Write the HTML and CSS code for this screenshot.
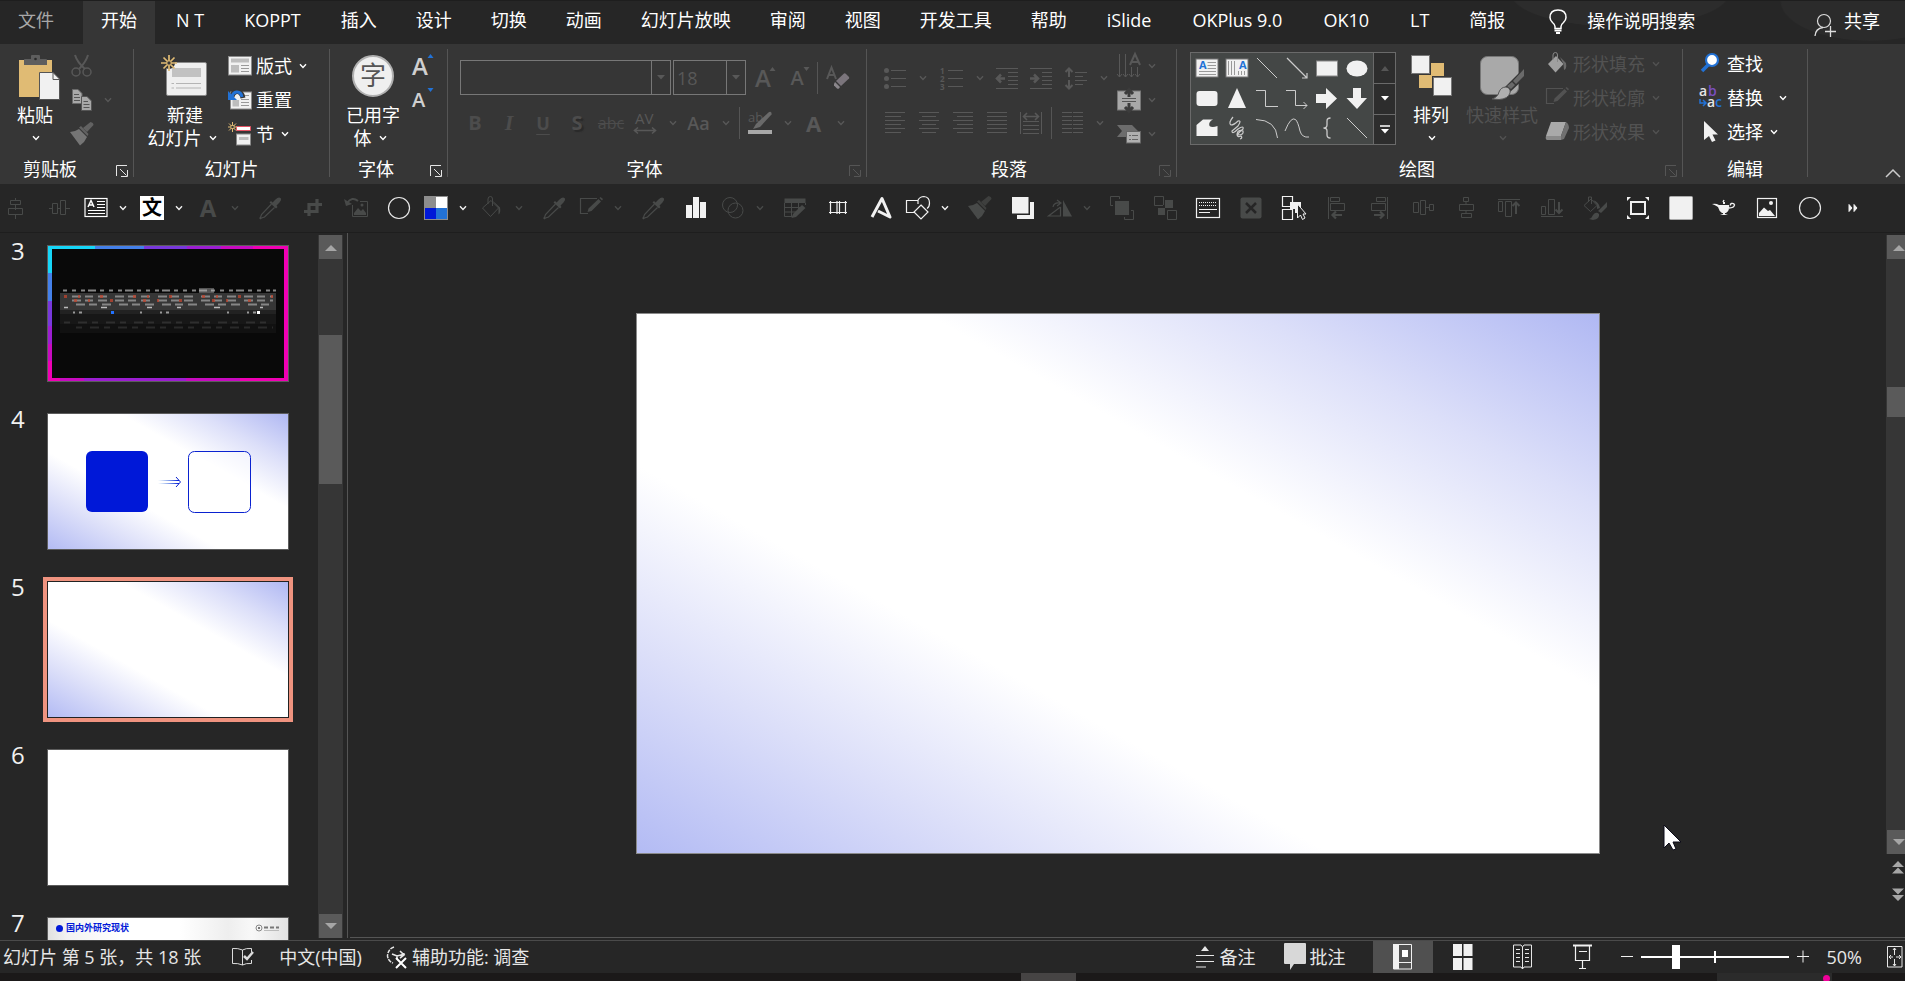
FILE: index.html
```html
<!DOCTYPE html>
<html lang="zh-CN">
<head>
<meta charset="utf-8">
<title>幻灯片编辑</title>
<link rel="stylesheet" href="styles.css">
</head>
<body>
<svg class="defs" aria-hidden="true">
  <symbol id="chev" viewBox="0 0 8 6"><path d="M1 1.2L4 4.4L7 1.2" fill="none" stroke="currentColor" stroke-width="1.4"/></symbol>
  <symbol id="launch" viewBox="0 0 12 12"><path d="M.5 11V.5H11M4 4L10.5 10.5M11.5 5V11.5H5" fill="none" stroke="currentColor"/></symbol>
  <symbol id="tri" viewBox="0 0 8 5"><path d="M0 0H8L4 4.5Z" fill="currentColor"/></symbol>
  <symbol id="triup" viewBox="0 0 12 7"><path d="M0 7H12L6 1Z" fill="currentColor"/></symbol>
  <symbol id="tridn" viewBox="0 0 12 7"><path d="M0 0H12L6 6Z" fill="currentColor"/></symbol>
  <symbol id="dropper" viewBox="0 0 24 24"><path d="M14.500 6.500L17.500 3.500Q20.500 .5 22.500 2Q24 3.500 21.500 6.500L18.500 9.500L19.500 11L18 12.500L11.500 6.500L13 5Z" fill="currentColor"/><path d="M13.500 8L3.500 18.500L2.500 21.500L1.500 22.500M16.500 11.500L6.500 21L3.500 22L2 23" fill="none" stroke="currentColor" stroke-width="1.200"/></symbol>
  <symbol id="brush" viewBox="0 0 24 24"><path d="M0 10L5 9L9 7L17 15L14 20L10 23.500Z" fill="currentColor"/><path d="M9 5.500L11 4L18.500 12L17.500 14Z" fill="currentColor" opacity=".7"/><path d="M13 6L20.500 0Q23.500 .5 23.500 3L17 10Z" fill="currentColor" opacity=".7"/></symbol>
  <symbol id="bucket" viewBox="0 0 24 24"><path d="M11 4.500L2.500 12L10.500 20.500L18.500 12Z M8 8V3Q8 .5 10.500 .5Q12.500 .5 12.500 3V10" fill="none" stroke="currentColor"/><path d="M12 4L20 11.500Q21 17 18.500 18.500V12Z" fill="currentColor"/></symbol>
  <symbol id="penrect" viewBox="0 0 24 24"><path d="M18 2.500H1.500V17.500H9" fill="none" stroke="currentColor" stroke-width="1.200"/><path d="M8.500 16L9.500 12.500L19.500 3L22 5.500L12.500 15ZM20.500 2L21.500 1L24 3L23 4.500Z" fill="currentColor"/></symbol>
</svg>

<header class="tabs">
  <nav class="tablist">
    <button class="tab file">文件</button>
    <button class="tab active">开始</button>
    <button class="tab">N T</button>
    <button class="tab latin">KOPPT</button>
    <button class="tab">插入</button>
    <button class="tab">设计</button>
    <button class="tab">切换</button>
    <button class="tab">动画</button>
    <button class="tab">幻灯片放映</button>
    <button class="tab">审阅</button>
    <button class="tab">视图</button>
    <button class="tab">开发工具</button>
    <button class="tab">帮助</button>
    <button class="tab latin">iSlide</button>
    <button class="tab latin">OKPlus 9.0</button>
    <button class="tab latin">OK10</button>
    <button class="tab latin">LT</button>
    <button class="tab">简报</button>
  </nav>
  <button class="tell"><svg width="18" height="26" viewBox="0 0 18 26"><path d="M6 19.500V17.500Q6 15.500 3.500 13.500Q1 11 1 8.500Q1 1 9 1Q17 1 17 8.500Q17 11 14.500 13.500Q12 15.500 12 17.500V19.500Z" fill="none" stroke="#fff" stroke-width="1.500"/><path d="M5.500 21.500H12.500M7 24H11" stroke="#fff" stroke-width="1.800"/></svg>操作说明搜索</button>
  <button class="share"><svg width="22" height="24" viewBox="0 0 22 24"><circle cx="10" cy="8" r="6.500" fill="none" stroke="#ddd" stroke-width="1.200"/><path d="M1 23Q1.500 15.500 9 14.500M16.500 13V24M11 18.500H22" fill="none" stroke="#ddd" stroke-width="1.300"/></svg>共享</button>
</header>

<section class="ribbon">
  <div class="group">
    <div class="body">
      <button class="big paste"><svg width="53" height="48" viewBox="-7 0 53 48"><path d="M3 5H36V18H23V42H3Z" fill="#e0bb74"/><path d="M8 4.500Q8 4 9 4H15V1Q15 0 16 0H23Q24 0 24 1V4H30Q31 4 31 5V10H8Z" fill="#5e5e5e"/><circle cx="19.500" cy="4" r="1.300" fill="#2a2a2a"/><path d="M23.500 17.500H37L43.500 24V44.500H23.500Z" fill="#f1f1f1" stroke="#555"/><path d="M37 17.500V24.500H43.500" fill="none" stroke="#555"/></svg><span>粘贴</span><span class="line"><svg class="ch"><use href="#chev"/></svg></span></button>
      <div class="rows dim">
        <button class="row" aria-label="剪切"><svg class="i24" viewBox="0 0 24 24"><path d="M5 1Q7 8 15 15M18 1Q16 8 9 15" fill="none" stroke="currentColor" stroke-width="2"/><circle cx="6" cy="18" r="4" fill="none" stroke="currentColor" stroke-width="1.500"/><circle cx="17" cy="18" r="4" fill="none" stroke="currentColor" stroke-width="1.500"/></svg></button>
        <button class="row" aria-label="复制"><svg class="i24" viewBox="0 0 24 24"><path d="M2.500 1.500H8L12 5.500V15.500H2.500Z" fill="#a8a8a8" stroke="#6a6a6a"/><path d="M4 6.500H9M4 9.500H10M4 12.500H10" stroke="#555"/><path d="M11.500 8.500H17L21.500 13V22.500H11.500Z" fill="#a8a8a8" stroke="#555"/><path d="M13.500 13.500H18M13.500 16.500H19.500M13.500 19.500H19.500" stroke="#555"/></svg><svg class="ch"><use href="#chev"/></svg></button>
        <button class="row painter" aria-label="格式刷"><svg class="i24"><use href="#brush"/></svg></button>
      </div>
    </div>
    <footer><span class="gname first">剪贴板</span><button class="ln" aria-label="剪贴板选项"><svg width="12" height="12"><use href="#launch"/></svg></button></footer>
  </div>

  <div class="group">
    <div class="body pad4">
      <button class="big newslide"><svg width="50" height="48" viewBox="0 0 50 48"><rect x="6.500" y="7.500" width="40" height="33" rx="1.500" fill="#efefef" stroke="#8a8a8a"/><rect x="12" y="13" width="29" height="9" fill="#c2c2c2"/><path d="M11.500 28.500H14M16 28.500H41M11.500 33H14M16 33H41" stroke="#b5b5b5"/><circle cx="9" cy="8" r="6" fill="#363636"/><path d="M9 0V16M1 8H17M3.500 2.500L14.500 13.500M14.500 2.500L3.500 13.500" stroke="#e0bb74" stroke-width="1.700"/><circle cx="9" cy="8" r="2.200" fill="#363636" stroke="#e0bb74"/></svg><span>新建</span><span class="line">幻灯片<svg class="ch"><use href="#chev"/></svg></span></button>
      <div class="rows">
        <button class="row"><svg class="i24" viewBox="0 0 24 24"><rect x=".5" y="2.500" width="23" height="18.500" fill="#f1f1f1" stroke="#8a8a8a"/><path d="M3 4.500H21V8.500H3ZM3 11H11V18.500H3Z" fill="#bdbdbd"/><path d="M13 11.500H21M13 14.500H21M13 17.500H21" stroke="#999"/></svg>版式<svg class="ch"><use href="#chev"/></svg></button>
        <button class="row"><svg class="i24" viewBox="0 0 24 24"><rect x="2.500" y="4" width="21" height="17" fill="#f1f1f1" stroke="#8a8a8a"/><path d="M4.500 12H11V18.500H4.500Z" fill="#bdbdbd"/><path d="M13 11.500H21M13 14.500H21M13 17.500H21M16 7.500H21" stroke="#999"/><path d="M15 10Q13.500 3 8.500 3.500Q5 4 4 8.500" fill="none" stroke="#363636" stroke-width="5"/><path d="M14 9Q13 3.500 8.500 4Q5 4.500 4 8.500" fill="none" stroke="#2272d6" stroke-width="3"/><path d="M0 3V12H9Z" fill="#2272d6"/></svg>重置</button>
        <button class="row"><svg class="i24" viewBox="0 0 24 24"><path d="M8.500 4.500H22.500V8.500H8.500Z" fill="#fff" stroke="#e35263"/><rect x="8.500" y="12" width="14" height="11" fill="#f1f1f1" stroke="#8a8a8a"/><path d="M11 15H20.500V18H11Z" fill="#bdbdbd"/><path d="M4.500 0V10M0 5H9M1 1.500L8 8.500M8 1.500L1 8.500" stroke="#e0bb74"/><rect x="3" y="3.500" width="3" height="3" fill="#363636" stroke="#e0bb74" stroke-width=".8"/></svg>节<svg class="ch"><use href="#chev"/></svg></button>
      </div>
    </div>
    <footer><span class="gname">幻灯片</span></footer>
  </div>

  <div class="group">
    <div class="body pad4">
      <button class="big usedfont"><span class="zi">字</span><span>已用字</span><span class="line">体<svg class="ch"><use href="#chev"/></svg></span></button>
      <div class="rows">
        <button class="row grow">A<svg class="mark" width="7" height="4" viewBox="0 0 6 4"><path d="M0 4H6L3 0Z" fill="#2272d6"/></svg></button>
        <button class="row grow small">A<svg class="mark" width="7" height="4" viewBox="0 0 6 4"><path d="M0 0H6L3 4Z" fill="#2272d6"/></svg></button>
      </div>
    </div>
    <footer><span class="gname">字体</span><button class="ln" aria-label="字体选项"><svg width="12" height="12"><use href="#launch"/></svg></button></footer>
  </div>

  <div class="group dim">
    <div class="body col fonts">
      <div class="tools tall">
        <label class="combo wide"><select aria-label="字体名称"><option></option></select><svg width="8" height="5"><use href="#tri"/></svg></label>
        <label class="combo"><select aria-label="字号"><option>18</option></select><svg width="8" height="5"><use href="#tri"/></svg></label>
        <button class="t grow">A<svg class="mark" width="7" height="4" viewBox="0 0 6 4"><path d="M0 4H6L3 0Z" fill="currentColor"/></svg></button>
        <button class="t grow small">A<svg class="mark" width="7" height="4" viewBox="0 0 6 4"><path d="M0 0H6L3 4Z" fill="currentColor"/></svg></button>
        <i class="sep"></i>
        <button class="t" aria-label="清除格式"><svg class="i24" viewBox="0 0 24 24"><path d="M1 13L5.500 1.500L10 13M2.500 9H8.500" fill="none" stroke="currentColor" stroke-width="2"/><path d="M10 15L18 7.500Q19 7 20 8L23 11Q23.500 12 23 12.500L15 20Z" fill="#7b757c"/><path d="M9 16L14 21L13 22.500Q12 23 11 22.500L8 19.500Q7.500 18 9 16Z" fill="#8a868b"/></svg></button>
      </div>
      <div class="tools">
        <button class="t b">B</button><button class="t it">I</button><button class="t u">U</button><button class="t sh">S</button><button class="t st">abc</button>
        <button class="t dd"><svg class="i34" viewBox="0 0 34 24"><text x="7" y="13" class="svgt av">AV</text><path d="M6 19.500H28M10 16.500L6.500 19.500L10 22.500M24 16.500L27.500 19.500L24 22.500" fill="none" stroke="currentColor" stroke-width="1.600"/></svg><svg class="ch"><use href="#chev"/></svg></button>
        <button class="t dd aa"><span>Aa</span><svg class="ch"><use href="#chev"/></svg></button>
        <i class="sep"></i>
        <button class="t dd"><svg class="i34" viewBox="0 0 34 24"><text x="5" y="11" class="svgt ab">ab</text><path d="M10 18L13 13L26 1Q29 0 28.500 3.500L17 16Z" fill="#6a6a6a"/><rect x="5" y="19" width="24" height="4" fill="#a8a8a8"/></svg><svg class="ch"><use href="#chev"/></svg></button>
        <button class="t dd fc"><span>A</span><svg class="ch"><use href="#chev"/></svg></button>
      </div>
    </div>
    <footer><span class="gname">字体</span><button class="ln" aria-label="字体选项"><svg width="12" height="12"><use href="#launch"/></svg></button></footer>
  </div>

  <div class="group dim">
    <div class="body">
      <div class="col para">
        <div class="tools tall gap">
          <button class="t dd"><svg class="i34" viewBox="0 0 34 24"><path d="M13 4.500H28M13 12.500H28M13 20.500H28" stroke="currentColor"/><g fill="currentColor"><circle cx="8.500" cy="4.500" r="2.500"/><circle cx="8.500" cy="12.500" r="2.500"/><circle cx="8.500" cy="20.500" r="2.500"/></g></svg><svg class="ch"><use href="#chev"/></svg></button>
          <button class="t dd"><svg class="i34" viewBox="0 0 34 24"><path d="M13 4.500H28M13 12.500H28M13 20.500H28" stroke="currentColor"/><text x="5" y="8" class="svgt n">1</text><text x="5" y="16" class="svgt n">2</text><text x="5" y="24" class="svgt n">3</text></svg><svg class="ch"><use href="#chev"/></svg></button>
          <button class="t" aria-label="减少缩进"><svg class="i24" viewBox="0 0 24 24"><path d="M1 2.500H23M13 6.500H23M13 10.500H23M13 14.500H23M13 18.500H23M1 22.500H23" stroke="currentColor"/><path d="M4 12.500H10M6 8.500L2 12.500L6 16.500" stroke="currentColor" stroke-width="2.500" fill="none"/></svg></button>
          <button class="t" aria-label="增加缩进"><svg class="i24" viewBox="0 0 24 24"><path d="M1 2.500H23M13 6.500H23M13 10.500H23M13 14.500H23M13 18.500H23M1 22.500H23" stroke="currentColor"/><path d="M1 12.500H8M5 8.500L9 12.500L5 16.500" stroke="currentColor" stroke-width="2.500" fill="none"/></svg></button>
          <button class="t dd"><svg class="i34" viewBox="0 0 34 24"><path d="M16 6.500H28M16 10.500H24M16 14.500H28M16 18.500H24" stroke="currentColor"/><path d="M10 3V11M10 14V22M6.500 6L10 2.500L13.500 6M6.500 19L10 22.500L13.500 19" stroke="currentColor" stroke-width="2" fill="none"/></svg><svg class="ch"><use href="#chev"/></svg></button>
        </div>
        <div class="tools">
          <button class="t" aria-label="左对齐"><svg class="i24" viewBox="0 0 24 24"><path d="M2 1.500H22M2 5.500H18M2 9.500H22M2 13.500H18M2 17.500H22M2 21.500H18" stroke="currentColor"/></svg></button>
          <button class="t" aria-label="居中"><svg class="i24" viewBox="0 0 24 24"><path d="M2 1.500H22M5 5.500H19M2 9.500H22M5 13.500H19M2 17.500H22M5 21.500H19" stroke="currentColor"/></svg></button>
          <button class="t" aria-label="右对齐"><svg class="i24" viewBox="0 0 24 24"><path d="M2 1.500H22M6 5.500H22M2 9.500H22M6 13.500H22M2 17.500H22M6 21.500H22" stroke="currentColor"/></svg></button>
          <button class="t" aria-label="两端对齐"><svg class="i24" viewBox="0 0 24 24"><path d="M2 1.500H22M2 5.500H22M2 9.500H22M2 13.500H22M2 17.500H22M2 21.500H22" stroke="currentColor"/></svg></button>
          <button class="t" aria-label="分散对齐"><svg class="i24" viewBox="0 0 24 24"><path d="M1.500 1V23M22.500 1V23M4 10.500H20M4 14.500H20M4 18.500H20M4 22.500H20" stroke="currentColor"/><path d="M4.500 5.500H19.500M8 2L4.500 5.500L8 9M16 2L19.500 5.500L16 9" stroke="currentColor" stroke-width="1.600" fill="none"/></svg></button>
          <i class="sep"></i>
          <button class="t dd"><svg class="i34" viewBox="0 0 34 24"><path d="M7 1.500H17M18 1.500H28M7 5.500H17M18 5.500H28M7 9.500H17M18 9.500H28M7 13.500H17M18 13.500H28M7 17.500H17M18 17.500H28M7 21.500H17M18 21.500H28" stroke="currentColor"/></svg><svg class="ch"><use href="#chev"/></svg></button>
        </div>
      </div>
      <div class="rows tight">
        <button class="row" aria-label="文字方向"><svg class="i24" viewBox="0 0 24 24"><path d="M2.500 0V23M8.500 0V23M14.500 13V23M20.500 13V23M0 20L2.500 23L5 20M6 20L8.500 23L11 20M12 20L14.500 23L17 20M18 20L20.500 23L23 20" fill="none" stroke="currentColor"/><path d="M13 11L18 0L23 11M15 8H21.500" fill="none" stroke="currentColor" stroke-width="2"/></svg><svg class="ch"><use href="#chev"/></svg></button>
        <button class="row" aria-label="对齐文本"><svg class="i24" viewBox="0 0 24 24"><rect x=".5" y="3" width="23" height="19" fill="#a8a8a8" stroke="#777"/><path d="M5 10.500H19M5 13.500H19" stroke="#555"/><path d="M12 9V3M8 6L12 1.500L16 6M12 15V22M8 19L12 23.500L16 19" fill="none" stroke="#3c3c3c" stroke-width="3"/></svg><svg class="ch"><use href="#chev"/></svg></button>
        <button class="row" aria-label="转换为 SmartArt"><svg class="i24" viewBox="0 0 24 24"><path d="M0 3H15L21 9H9V15H0L5 9Z" fill="#6c6c6c"/><rect x="9.500" y="9.500" width="14" height="11.500" fill="#b0b0b0" stroke="#666"/><path d="M12 13.500H14M15 13.500H21M12 17.500H14M15 17.500H21" stroke="#666"/></svg><svg class="ch"><use href="#chev"/></svg></button>
      </div>
    </div>
    <footer><span class="gname">段落</span><button class="ln" aria-label="段落选项"><svg width="12" height="12"><use href="#launch"/></svg></button></footer>
  </div>

  <div class="group">
    <div class="body draw">
      <div class="gallery">
        <div class="shapes">
          <button aria-label="文本框"><svg class="i24" viewBox="0 0 24 24"><rect x="1" y="3" width="22" height="18" fill="#f1f1f1" stroke="#777"/><text x="4" y="13" class="svgt ba">A</text><path d="M12.500 6.500H21M12.500 9.500H21M12.500 12.500H21M4 15.500H21M4 18.500H21" stroke="#999"/></svg></button>
          <button aria-label="竖排文本框"><svg class="i24" viewBox="0 0 24 24"><rect x="1" y="3" width="22" height="18" fill="#f1f1f1" stroke="#777"/><text x="14" y="13" class="svgt ba">A</text><path d="M3.500 5V19M6.500 5V19M9.500 5V19M13.500 15V19M16.500 15V19M19.500 15V19" stroke="#999"/></svg></button>
          <button aria-label="直线"><svg class="i24" viewBox="0 0 24 24"><path d="M2 2L22 22" stroke="#ccc"/></svg></button>
          <button aria-label="箭头"><svg class="i24" viewBox="0 0 24 24"><path d="M2 2L22 22M22 17V22H17" stroke="#ccc" fill="none" stroke-width="1.200"/></svg></button>
          <button aria-label="矩形"><svg class="i24" viewBox="0 0 24 24"><rect x="1.500" y="5" width="21" height="15" fill="#f1f1f1" stroke="#888"/></svg></button>
          <button aria-label="椭圆"><svg class="i24" viewBox="0 0 24 24"><ellipse cx="12" cy="12.500" rx="10.500" ry="8" fill="#f1f1f1"/></svg></button>
          <button aria-label="圆角矩形"><svg class="i24" viewBox="0 0 24 24"><rect x="1.500" y="5" width="21" height="15" rx="3" fill="#f1f1f1"/></svg></button>
          <button aria-label="三角形"><svg class="i24" viewBox="0 0 24 24"><path d="M12 2L21 22H3Z" fill="#f1f1f1"/></svg></button>
          <button aria-label="肘形连接符"><svg class="i24" viewBox="0 0 24 24"><path d="M1 4.500H10.500V20.500H23" stroke="#ccc" fill="none"/></svg></button>
          <button aria-label="肘形箭头"><svg class="i24" viewBox="0 0 24 24"><path d="M1 4.500H10.500V19.500H22M18.500 16L22 19.500L18.500 23" stroke="#ccc" fill="none"/></svg></button>
          <button aria-label="右箭头"><svg class="i24" viewBox="0 0 24 24"><path d="M1 8H11V2L22 12.500L11 23V17H1Z" fill="#f1f1f1"/></svg></button>
          <button aria-label="下箭头"><svg class="i24" viewBox="0 0 24 24"><path d="M8 2H16V12H22L12 23L1.500 12H8Z" fill="#f1f1f1"/></svg></button>
          <button aria-label="任意多边形"><svg class="i24" viewBox="0 0 24 24"><path d="M1.500 9L8 3.500H18Q13 6 14.500 10Q17 12 22.500 10V20H1.500Z" fill="#f1f1f1"/></svg></button>
          <button aria-label="自由曲线"><svg class="i24" viewBox="0 0 24 24"><path d="M8 1Q3 7 6 9Q9 9 13 5Q17 4 13 10L7 15Q7 19 13 13Q19 9 18 13Q12 18 13 19Q19 19 18 15Q13 13 12 18Q12 22 16 20Q18 22 15 23" stroke="#ccc" fill="none" stroke-width="1.200"/></svg></button>
          <button aria-label="弧形"><svg class="i24" viewBox="0 0 24 24"><path d="M1 3.500Q21 4 22.500 22" stroke="#ccc" fill="none"/></svg></button>
          <button aria-label="曲线"><svg class="i24" viewBox="0 0 24 24"><path d="M0 15Q6 0 10.500 3.500Q13 6 15 15Q17 22 24 21" stroke="#ccc" fill="none"/></svg></button>
          <button aria-label="左大括号"><svg class="i24" viewBox="0 0 24 24"><path d="M15.500 2Q12 2 12 5V9Q12 12 8.500 12Q12 12 12 15V19Q12 22 15.500 22" stroke="#ccc" fill="none" stroke-width="1.300"/></svg></button>
          <button aria-label="直线"><svg class="i24" viewBox="0 0 24 24"><path d="M2 2L22 22" stroke="#ccc"/></svg></button>
        </div>
        <div class="gscroll">
          <button class="off" aria-label="上一行"><svg width="8" height="5" viewBox="0 0 8 5"><path d="M0 5H8L4 0Z" fill="currentColor"/></svg></button>
          <button aria-label="下一行"><svg width="8" height="5"><use href="#tri"/></svg></button>
          <button aria-label="其他"><svg width="10" height="9" viewBox="0 0 10 9"><path d="M0 1H10" stroke="#fff" stroke-width="1.500"/><path d="M1 4H9L5 8.500Z" fill="#fff"/></svg></button>
        </div>
      </div>
      <button class="big arrange"><svg width="44" height="48" viewBox="0 0 44 48"><path d="M22 8H35V21H22ZM10 20H23V33H10Z" fill="#e0bb74"/><rect x="2.500" y=".5" width="18" height="18" fill="#f1f1f1" stroke="#777"/><rect x="24.500" y="22.500" width="18" height="18" fill="#f1f1f1" stroke="#777"/></svg><span>排列</span><span class="line"><svg class="ch"><use href="#chev"/></svg></span></button>
      <button class="big quick dim"><svg width="46" height="48" viewBox="0 0 46 48"><rect x="1.500" y="1.500" width="38" height="38" rx="7" fill="#a9a9a9" stroke="#777"/><path d="M45 13V24L30 38L24 34Z" fill="#363636"/><path d="M45 14V21L37 29L34 26ZM33 27L36 30L32 34L28 31Z" fill="#6a6a6a"/><path d="M13 44Q19 42 20 37Q22 32 27 32Q32 33 31 38Q29 44 20 44.500Z" fill="#b0b0b0" stroke="#555"/></svg><span>快速样式</span><span class="line"><svg class="ch"><use href="#chev"/></svg></span></button>
      <div class="rows dim">
        <button class="row"><svg class="i24" viewBox="0 0 24 24"><path d="M11 4L3 12L10.500 20.500L18.500 12Z" fill="#a0a0a0"/><path d="M8 8V3Q8 .5 10.500 .5Q12.500 .5 12.500 3V10" fill="none" stroke="#888"/><path d="M15 5L21 11Q22 17 19 18L18.500 12Z" fill="#6a6a6a"/></svg>形状填充<svg class="ch"><use href="#chev"/></svg></button>
        <button class="row"><svg class="i24"><use href="#penrect"/></svg>形状轮廓<svg class="ch"><use href="#chev"/></svg></button>
        <button class="row"><svg class="i24" viewBox="0 0 24 24"><path d="M6 2H21L16 16H1Z" fill="#a9a9a9"/><path d="M1 16H16V20H2Q0 19 1 16Z" fill="#8a8a8a"/><path d="M21 2Q24 4 24 8L19 19L16 20V16Z" fill="#707070"/></svg>形状效果<svg class="ch"><use href="#chev"/></svg></button>
      </div>
    </div>
    <footer class="dimln"><span class="gname">绘图</span><button class="ln" aria-label="形状选项"><svg width="12" height="12"><use href="#launch"/></svg></button></footer>
  </div>

  <div class="group">
    <div class="body edit">
      <div class="rows">
        <button class="row"><svg class="i24" viewBox="0 0 24 24"><path d="M3 19L10 12" stroke="#2272d6" stroke-width="3.500"/><circle cx="13" cy="8" r="6" fill="#fff" stroke="#2272d6" stroke-width="2.200"/></svg>查找</button>
        <button class="row"><svg class="i24" viewBox="0 0 24 24"><g class="svgt rp"><text x="0" y="10" fill="#e6e6e6">a</text><text x="9" y="10" fill="#7a4fc0">b</text><text x="8" y="21" fill="#e6e6e6">a</text><text x="16" y="21" fill="#2272d6">c</text></g><path d="M1 13V17H6M4 14L7 17L4 20" fill="none" stroke="#2272d6" stroke-width="1.500"/></svg>替换<svg class="ch far"><use href="#chev"/></svg></button>
        <button class="row"><svg class="i24" viewBox="0 0 24 24"><path d="M5 1V20L10 16L13 22L16.500 20.500L13.500 14.500H19Z" fill="#f1f1f1"/></svg>选择<svg class="ch"><use href="#chev"/></svg></button>
      </div>
    </div>
    <footer><span class="gname">编辑</span></footer>
  </div>
  <div class="rest"><button aria-label="折叠功能区"><svg width="16" height="9" viewBox="0 0 16 9"><path d="M1 8L8 1L15 8" fill="none" stroke="#ccc" stroke-width="1.500"/></svg></button></div>
</section>

<section class="qat">
  <button class="q off"><svg class="i24" viewBox="0 0 24 24"><path d="M12.500 2V4M12.500 9V14M12.500 19V23" stroke="currentColor"/><path d="M7.500 4.500H17.500V8.500H7.500ZM5.500 12.500H19.500V18.500H5.500Z" fill="none" stroke="currentColor"/></svg></button>
  <button class="q off"><svg class="i24" viewBox="0 0 24 24"><path d="M2 12.500H5M11 12.500H13M19 12.500H23" stroke="currentColor"/><path d="M5.500 7.500H10.500V17.500H5.500ZM13.500 4.500H18.500V18.500H13.500Z" fill="none" stroke="currentColor"/></svg></button>
  <button class="q split"><svg class="i24" viewBox="0 0 24 24"><rect x="1" y="2.500" width="22" height="18" fill="none" stroke="#fff" stroke-width="1.200"/><path d="M4 11L7 4.500L10 11M5 9H9" fill="none" stroke="#fff" stroke-width="1.500"/><path d="M13 5.500H21M13 8.500H21M13 11.500H21M4 14.500H21M4 17.500H21" stroke="#fff"/></svg><svg class="ch"><use href="#chev"/></svg></button>
  <button class="q split"><span class="wen">文</span><svg class="ch"><use href="#chev"/></svg></button>
  <button class="q split off"><span class="bigA">A</span><svg class="ch"><use href="#chev"/></svg></button>
  <button class="q off"><svg class="i24"><use href="#dropper"/></svg></button>
  <button class="q off"><svg class="i24" viewBox="0 0 24 24"><path d="M3 15.500H16V3M8 20V8.500H21" fill="none" stroke="currentColor" stroke-width="3.200"/></svg></button>
  <button class="q off"><svg class="i24" viewBox="0 0 24 24"><path d="M16 5.500H23.500V20.500H8.500V9" fill="none" stroke="currentColor"/><path d="M10 19V17L14 12L17 15L19 13L22 17V19Z" fill="currentColor"/><circle cx="18" cy="9" r="1.500" fill="currentColor"/><path d="M3 7Q8 0 14 5" fill="none" stroke="currentColor" stroke-width="2"/><path d="M0 3L2 10L8 8Z" fill="currentColor"/></svg></button>
  <button class="q"><svg class="i24" viewBox="0 0 24 24"><circle cx="12" cy="12" r="10.500" fill="none" stroke="#e8e8e8" stroke-width="1.200"/></svg></button>
  <button class="q split"><svg class="i24" viewBox="0 0 24 24"><rect width="24" height="24" fill="#8d8d8d"/><path d="M12 1H23V12H12Z" fill="#fff"/><path d="M1 12H12V23H1Z" fill="#0018d8"/><path d="M12 12H23V23H12Z" fill="#2272d6"/></svg><svg class="ch"><use href="#chev"/></svg></button>
  <button class="q split off"><svg class="i24"><use href="#bucket"/></svg><svg class="ch"><use href="#chev"/></svg></button>
  <button class="q off"><svg class="i24"><use href="#dropper"/></svg></button>
  <button class="q split off"><svg class="i24"><use href="#penrect"/></svg><svg class="ch"><use href="#chev"/></svg></button>
  <button class="q off"><svg class="i24"><use href="#dropper"/></svg></button>
  <button class="q"><svg class="i24" viewBox="0 0 24 24"><path d="M2 9H8V22H2ZM9 1H15V22H9ZM16 6H22V22H16Z" fill="#f1f1f1"/></svg></button>
  <button class="q split off"><svg class="i24" viewBox="0 0 24 24"><circle cx="9" cy="9" r="7.500" fill="none" stroke="currentColor"/><circle cx="14.500" cy="14.500" r="7.500" fill="none" stroke="currentColor"/></svg><svg class="ch"><use href="#chev"/></svg></button>
  <button class="q off"><svg class="i24" viewBox="0 0 24 24"><path d="M1.500 2.500H22.500V7H1.500Z" fill="currentColor"/><path d="M1.500 7V20.500H11M22.500 7V9M8.500 7V20M15.500 7V13M1.500 11.500H17M1.500 16H13" fill="none" stroke="currentColor"/><path d="M8.500 22L10 18L19 9L22.500 12L13 21Z" fill="currentColor"/></svg></button>
  <button class="q"><svg class="i24" viewBox="0 0 24 24"><path d="M3 6.500H21M3 16.500H21M4.500 5V18M11 5V18M13.500 5V18M19.500 5V18" stroke="#f1f1f1" fill="none" stroke-width="1.200"/></svg></button>
  <button class="q"><svg class="i24" viewBox="0 0 24 24"><path d="M3 21L13 2.500L21 21L9 15" fill="none" stroke="#f1f1f1" stroke-width="3" stroke-linejoin="round"/></svg></button>
  <button class="q split"><svg class="i24" viewBox="0 0 24 24"><path d="M9 16.500H.5V4.500H12V8M12 4Q14 .5 18 .5Q23.500 1 23.500 7Q23.500 11 21 12.500M15 9L22 16L15 23L8 16Z" fill="none" stroke="#f1f1f1" stroke-width="1.200"/></svg><svg class="ch"><use href="#chev"/></svg></button>
  <button class="q off"><svg class="i24"><use href="#brush"/></svg></button>
  <button class="q"><svg class="i24" viewBox="0 0 24 24"><path d="M6 6H23V23H6Z" fill="#f1f1f1"/><path d="M0 0H19V19H0Z" fill="#262626"/><path d="M1 1H17.500V17.500H1Z" fill="#f1f1f1"/></svg></button>
  <button class="q split off"><svg class="i24" viewBox="0 0 24 24"><path d="M15 4L24 20.500H15Z" fill="currentColor"/><path d="M12.500 11V20H.5L12.500 11M5 11Q6 6 12 7M9 4L13 7L9 10" fill="none" stroke="currentColor" stroke-width="1.200"/></svg><svg class="ch"><use href="#chev"/></svg></button>
  <button class="q off"><svg class="i24" viewBox="0 0 24 24"><path d="M5 5H19V19H5Z" fill="currentColor"/><path d="M3 9.500H.5V.5H9.500V3M21 14.500H23.500V23.500H14.500V21" fill="none" stroke="currentColor"/></svg></button>
  <button class="q off"><svg class="i24" viewBox="0 0 24 24"><path d="M12 4H20V12H12ZM5 12H12V19H5Z" fill="currentColor"/><path d="M10 9.500H1.500V.5H10.500V9M14.500 14.500H23.500V23.500H14.500Z" fill="none" stroke="currentColor"/></svg></button>
  <button class="q"><svg class="i24" viewBox="0 0 24 24"><rect x=".5" y="2.500" width="23" height="19" fill="none" stroke="#f1f1f1" stroke-width="1.200"/><path d="M3 6.500H21M3 9.500H21" stroke="#f1f1f1" stroke-dasharray="1 1"/><path d="M3 13.500H21" stroke="#f1f1f1"/><path d="M3 16.500H14" stroke="#f1f1f1"/></svg></button>
  <button class="q off"><svg class="i24" viewBox="0 0 24 24"><rect x="1.500" y="1.500" width="21" height="21" rx="2" fill="currentColor"/><path d="M7 7L17 17M17 7L7 17" stroke="#262626" stroke-width="2.500"/></svg></button>
  <button class="q"><svg class="i24" viewBox="0 0 24 24"><path d="M.5 .5H10.500V10.500H.5ZM.5 13.500H10.500V23.500H.5Z" fill="none" stroke="#f1f1f1" stroke-width="1.200"/><path d="M8 6H19V17H13V13H8Z" fill="#f1f1f1"/><path d="M15.500 8V22L18.500 19L20.500 23.500L23 22L21 18H24Z" fill="#262626" stroke="#f1f1f1"/></svg></button>
  <button class="q off"><svg class="i24" viewBox="0 0 24 24"><path d="M3.500 1V23M5.500 1.500H14.500V5.500H5.500ZM5.500 7.500H19.500V14.500H5.500Z" fill="none" stroke="currentColor"/><path d="M7 19H17M11 15.500L7.500 19L11 22.500" fill="none" stroke="currentColor" stroke-width="2.200"/></svg></button>
  <button class="q off"><svg class="i24" viewBox="0 0 24 24"><path d="M19.500 1V23M8.500 1.500H17.500V5.500H8.500ZM3.500 7.500H17.500V14.500H3.500Z" fill="none" stroke="currentColor"/><path d="M6 19H16M12 15.500L15.500 19L12 22.500" fill="none" stroke="currentColor" stroke-width="2.200"/></svg></button>
  <button class="q off"><svg class="i24" viewBox="0 0 24 24"><path d="M2.500 6.500H7.500V16.500H2.500ZM9.500 4.500H14.500V18.500H9.500ZM18.500 8.500H22.500V14.500H18.500ZM14 11.500H18" fill="none" stroke="currentColor"/></svg></button>
  <button class="q off"><svg class="i24" viewBox="0 0 24 24"><path d="M9.500 1.500H14.500V5.500H9.500ZM5.500 8.500H19.500V14.500H5.500ZM7.500 17.500H17.500V21.500H7.500ZM12 5V8M12 14V17" fill="none" stroke="currentColor"/></svg></button>
  <button class="q off"><svg class="i24" viewBox="0 0 24 24"><path d="M1 3.500H23M1.500 5.500H5.500V15.500H1.500ZM8.500 5.500H14.500V20.500H8.500Z" fill="none" stroke="currentColor"/><path d="M19 6V18M15.500 10L19 6.500L22.500 10" fill="none" stroke="currentColor" stroke-width="2"/></svg></button>
  <button class="q off"><svg class="i24" viewBox="0 0 24 24"><path d="M1 20.500H23M1.500 10.500H5.500V18.500H1.500ZM8.500 3.500H14.500V18.500H8.500Z" fill="none" stroke="currentColor"/><path d="M19 6V17M15.500 13.500L19 17L22.500 13.500" fill="none" stroke="currentColor" stroke-width="2"/></svg></button>
  <button class="q off"><svg class="i24" viewBox="0 0 24 24"><path d="M8 3L1 9.500L7.500 15.500L14 9.500Z M5.500 6V1H8.500V8" fill="none" stroke="currentColor"/><path d="M10 4Q16 6 17 12L14 13V9ZM24 6V11L18 17L15 15ZM6 23Q9 22 10 19Q13 15 16 18Q17 23 10 24Z" fill="currentColor"/></svg></button>
  <button class="q"><svg class="i24" viewBox="0 0 24 24"><rect x="5" y="6" width="14" height="12" fill="none" stroke="#f1f1f1" stroke-width="2"/><path d="M1 1H5L1 5ZM23 1H19L23 5ZM1 23H5L1 19ZM23 23H19L23 19Z" fill="#f1f1f1"/></svg></button>
  <button class="q"><svg class="i24" viewBox="0 0 24 24"><rect x=".5" y=".5" width="23" height="23" rx="1" fill="#f1f1f1" stroke="#aaa"/></svg></button>
  <button class="q"><svg class="i24" viewBox="0 0 24 24"><path d="M0 8Q4 7 7 9H17Q18 14 14 17H13V18L16 19H8L11 18V17H10Q7 15 6 11Q3 9 0 8ZM11 6H13V8H11Z" fill="#f1f1f1"/><path d="M11 6L12 4M17 12Q22 12 22.500 9Q22 7 19.500 7.500Q18 8 18.500 9.500" fill="none" stroke="#f1f1f1" stroke-width="1.400"/></svg></button>
  <button class="q"><svg class="i24" viewBox="0 0 24 24"><rect x="2.500" y="2.500" width="19" height="19" fill="none" stroke="#f1f1f1" stroke-width="1.200"/><path d="M4 20V17L9 11.500L13 15L15 14L20 20Z" fill="#f1f1f1"/><circle cx="16" cy="7" r="2" fill="#f1f1f1"/></svg></button>
  <button class="q"><svg class="i24" viewBox="0 0 24 24"><circle cx="12" cy="12" r="10.500" fill="none" stroke="#e8e8e8" stroke-width="1.200"/></svg></button>
  <button class="q"><svg class="i24" viewBox="0 0 24 24"><path d="M8 8.500L11 12L8 15.500ZM13 8.500L16 12L13 15.500Z" fill="#f1f1f1" stroke="#f1f1f1"/></svg></button>
</section>

<main class="work">
  <aside class="panel">
    <ol class="thumbs">
      <li><span class="num">3</span><button class="thumb" aria-label="幻灯片 3"><svg viewBox="0 0 240 135">
        <rect width="240" height="135" fill="#f000b4"/>
        <path d="M0 0H48V4L4 28H0Z" fill="#16d6f8"/><path d="M47 0H96V4H47ZM0 27H4V56H0Z" fill="#4480ea"/><path d="M96 0H140V4H96ZM0 55H4V82H0Z" fill="#7838dc"/><path d="M139 0H174V4H139ZM0 80H4V100H0ZM36 131H138V135H36Z" fill="#9c1ed2"/><path d="M173 0H205V4H173ZM0 98H4V115H0ZM12 131H36V135H12ZM138 131H192V135H138Z" fill="#c80ac0"/>
        <rect x="4" y="3" width="232" height="129" fill="#090909"/>
        <rect x="12" y="47" width="216" height="17" fill="#363636"/><rect x="12" y="64" width="216" height="4" fill="#222"/><rect x="151" y="42" width="15" height="5" fill="#555"/>
        <path d="M15 44.500H228" stroke="#bbb" stroke-width="2" stroke-dasharray="4 5 4 5 4 3 8 4" opacity=".7"/>
        <path d="M24 50.500H225M24 54.500H225M28 58.500H225" stroke="#bbb" stroke-width="2" stroke-dasharray="9 4 8 5 9 8" opacity=".6"/>
        <path d="M16 50.500H225M26 54.500H225" stroke="#c0452e" stroke-width="3" stroke-dasharray="3 11 2 20 3 30" opacity=".75"/>
        <path d="M16 61.500H215" stroke="#ddd" stroke-width="1.500" stroke-dasharray="4 33 6 40 5 25" opacity=".8"/>
        <path d="M25 66.500H223" stroke="#ccc" stroke-width="2" stroke-dasharray="2 4 3 58 2 18" opacity=".7"/><path d="M63 65H66V68H63Z" fill="#2272ff"/><path d="M209 65H212V68H209Z" fill="#fff"/>
        <rect x="12" y="68" width="216" height="10" fill="#1c1c1c" opacity=".8"/><rect x="12" y="78" width="216" height="9" fill="#151515" opacity=".7"/><path d="M16 76.500H225M28 81.500H225" stroke="#666" stroke-width="2" stroke-dasharray="6 8 9 5" opacity=".3"/>
      </svg></button></li>
      <li><span class="num">4</span><button class="thumb grad" aria-label="幻灯片 4"><svg viewBox="0 0 240 135"><defs><linearGradient id="ar"><stop offset="0" stop-color="#2272d6" stop-opacity="0"/><stop offset="1" stop-color="#0018d8"/></linearGradient></defs><rect x="38" y="37" width="62" height="61" rx="6" fill="#0018d8"/><rect x="140.500" y="37.500" width="62" height="61" rx="6" fill="#fff" fill-opacity=".5" stroke="#0a22d0"/><path d="M110 66H131V67H110ZM110 69H131V70H110Z" fill="url(#ar)"/><path d="M128 63L132.500 68L128 73" fill="none" stroke="#0a22d0"/></svg></button></li>
      <li><span class="num">5</span><button class="thumb grad sel" aria-label="幻灯片 5"></button></li>
      <li><span class="num">6</span><button class="thumb" aria-label="幻灯片 6"></button></li>
      <li><span class="num">7</span><button class="thumb study"><span class="dot"></span><b>国内外研究现状</b><svg width="25" height="8" viewBox="0 0 25 8"><circle cx="4" cy="4" r="3" fill="none" stroke="#888"/><path d="M3 4H5M9 3.500H24" stroke="#777" stroke-width="2" stroke-dasharray="4 2"/><path d="M9 6.500H24" stroke="#bbb"/></svg></button></li>
    </ol>
    <div class="sb"><button aria-label="向上滚动"><svg width="12" height="7"><use href="#triup"/></svg></button><i class="a1"></i><i class="grip g1"></i><i class="z1"></i><button aria-label="向下滚动"><svg width="12" height="7"><use href="#tridn"/></svg></button></div>
  </aside>
  <div class="stage">
    <div class="slide"></div>
    <svg class="cursor" width="20" height="28" viewBox="0 0 20 28"><path d="M1 1V24L6 19L10 26L13 25L10 18H18Z" fill="#fff" stroke="#0b0b18"/></svg>
  </div>
  <div class="right">
    <div class="sb narrow"><button aria-label="向上滚动"><svg width="12" height="7"><use href="#triup"/></svg></button><i class="a2"></i><i class="grip g2"></i><i class="z2"></i><button aria-label="向下滚动"><svg width="12" height="7"><use href="#tridn"/></svg></button></div>
    <button class="pg" aria-label="上一张"><svg width="12" height="13" viewBox="0 0 12 13"><path d="M0 6H12L6 0ZM0 12.500H12L6 6.500Z" fill="currentColor"/></svg></button>
    <button class="pg" aria-label="下一张"><svg width="12" height="13" viewBox="0 0 12 13"><path d="M0 .5H12L6 6.500ZM0 7H12L6 13Z" fill="currentColor"/></svg></button>
  </div>
</main>

<footer class="status">
  <span class="s-slide">幻灯片 第 5 张，共 18 张</span>
  <button class="s-spell" aria-label="拼写检查"><svg width="22" height="20" viewBox="0 0 22 20"><path d="M10.500 3Q6 1 .5 1.500V16.500Q6 16 10.500 18V3Q14 1 19.500 1.500V5M10.500 18Q14 16 19.500 16.500V13" fill="none" stroke="#ddd"/><path d="M12 9L15 12L21 5" fill="none" stroke="#ddd" stroke-width="2.500"/></svg></button>
  <button class="s-lang">中文(中国)</button>
  <button class="s-acc"><svg width="22" height="22" viewBox="0 0 22 22"><path d="M8 1Q2 3 1.500 10Q2 15 7 17" fill="none" stroke="#e6e6e6" stroke-width="1.500" stroke-dasharray="4 1"/><path d="M6 8L11 10L19 8M11 9V13M14 5L18 9L14 12" fill="none" stroke="#e6e6e6" stroke-width="1.600"/><path d="M10 12L20 22M20 12L10 22" stroke="#fff" stroke-width="2"/></svg>辅助功能: 调查</button>
  <span class="fill"></span>
  <button class="s-notes"><svg width="18" height="22" viewBox="0 0 18 22"><path d="M9 0L13 5H5Z" fill="#e6e6e6"/><path d="M0 9.500H18M0 15.500H18M0 21H10" stroke="#e6e6e6" stroke-width="1.200"/></svg>备注</button>
  <button class="s-comm"><svg width="22" height="27" viewBox="0 0 22 27"><path d="M1 0H21Q22 0 22 1V20Q22 21 21 21H10L6 27V21H1Q0 21 0 20V1Q0 0 1 0Z" fill="#d8d8d8"/></svg>批注</button>
  <button class="view on" aria-label="普通视图"><svg width="20" height="26" viewBox="0 0 20 26"><path d="M.5 .5H18.500V25H.5Z" fill="none" stroke="#f1f1f1"/><path d="M0 0H6V25H0Z" fill="#f1f1f1"/><path d="M9 6H15V13H9Z" fill="#fff"/><path d="M6 18.500H19" stroke="#f1f1f1"/></svg></button>
  <button class="view" aria-label="幻灯片浏览"><svg width="20" height="26" viewBox="0 0 20 26"><path d="M0 0H9V12H0ZM10.500 0H19.500V12H10.500ZM0 14H9V26H0ZM10.500 14H19.500V26H10.500Z" fill="#f1f1f1"/></svg></button>
  <button class="view" aria-label="阅读视图"><svg width="20" height="26" viewBox="0 0 20 26"><path d="M9.500 3L8 1H.5V23H8L9.500 25L11 23H18.500V1H11L9.500 3V25M3 5.500H7M3 9.500H7M3 13.500H7M3 17.500H7M12 5.500H16M12 9.500H16M12 13.500H16M12 17.500H16" fill="none" stroke="#e6e6e6"/></svg></button>
  <button class="view" aria-label="幻灯片放映"><svg width="20" height="26" viewBox="0 0 20 26"><path d="M0 1.500H19" stroke="#f1f1f1" stroke-width="2"/><path d="M2.500 2V16.500H16.500V2M6 7.500H14M9.500 16V24M6 24.500H13" fill="none" stroke="#f1f1f1" stroke-width="1.200"/></svg></button>
  <button class="zb" aria-label="缩小"><svg width="12" height="16" viewBox="0 0 12 16"><path d="M0 7.500H12" stroke="#f1f1f1"/></svg></button>
  <input class="zoom" type="range" min="10" max="190" value="50" aria-label="缩放">
  <button class="zb" aria-label="放大"><svg width="12" height="16" viewBox="0 0 12 16"><path d="M0 7.500H12M6 1.500V13.500" stroke="#f1f1f1"/></svg></button>
  <button class="pct">50%</button>
  <button class="fit" aria-label="适应窗口"><svg width="16" height="22" viewBox="0 0 16 22"><path d="M.5 .5H15V21H.5Z" fill="none" stroke="#e6e6e6"/><path d="M7.500 2V9M7.500 13V20M2 11H6M9 11H14M6 4L7.500 2L9 4M6 18L7.500 20L9 18M4 9L2 11L4 13M12 9L14 11L12 13" fill="none" stroke="#e6e6e6"/></svg></button>
</footer>
<div class="taskbar"><span class="app"></span><span class="tray"><i></i></span></div>
</body>
</html>
```
FILE: styles.css
```css
* { box-sizing: border-box; }
body {
  margin: 0;
  height: 100vh;
  display: flex;
  flex-direction: column;
  overflow: hidden;
  background: #262626;
  color: #fff;
  font: 18px/24px "Open Sans", "Noto Sans CJK SC", sans-serif;
}
button, select {
  margin: 0;
  padding: 0;
  border: 0;
  background: none;
  color: inherit;
  font: inherit;
  white-space: nowrap;
}
svg { display: block; flex: none; overflow: visible; }
.defs { position: absolute; width: 0; height: 0; }
.i24 { width: 24px; height: 24px; }
.i34 { width: 34px; height: 24px; }
.ch { width: 8px; height: 6px; margin: 0 6px 0 7px; }

/* Tab strip */
.tabs {
  display: flex;
  flex: none;
  height: 44px;
  align-items: stretch;
  border-top: 1px solid #1e1e1e;
  background:
    radial-gradient(ellipse 110px 34px at 1620px -8px, #2c2c2c 98%, transparent),
    radial-gradient(ellipse 90px 40px at 1870px 0, #2b2b2b 98%, transparent),
    #262626;
}
.tablist { display: flex; gap: 3px; }
.tab { padding: 0 18px 4px; height: 43px; line-height: 31px; }
.tab.latin { padding: 0 19px 4px; }
.tab.file { padding-right: 26px; color: #a8a8a8; }
.tab.active { background: #363636; }
.tell { display: flex; align-items: center; gap: 20px; margin-left: 26px; padding-bottom: 4px; height: 43px; }
.tell svg { margin-top: 2px; }
.share { display: flex; align-items: center; gap: 8px; margin: 0 25px 0 auto; padding-bottom: 4px; height: 43px; }
.share svg { margin-top: 8px; }

/* Ribbon */
.ribbon {
  flex: none;
  display: grid;
  grid-template-columns: 134px 196px 118px 419px 310px 506px 125px 1fr;
  height: 140px;
  padding-top: 5px;
  background: #363636;
}
.group { display: flex; flex-direction: column; position: relative; height: 128px; border-right: 1px solid #555; }
.body { display: flex; flex: 1; }
.pad4 { padding-left: 4px; }
.col { display: flex; flex-direction: column; gap: 13px; padding-top: 11px; }
.group footer { display: flex; align-items: center; height: 24px; margin-bottom: -4px; color: #fff; }
.gname { flex: 1; text-align: center; }
.gname.first { padding-right: 8px; }
.ln { width: 25px; padding: 3px 5px 0 8px; color: #e6e6e6; }
.dim { color: #585858; }
.dim .ln, .dimln .ln { color: #555; }
.big { display: flex; flex-direction: column; align-items: center; align-self: flex-start; padding-top: 6px; }
.big > svg { height: 48px; }
.line { display: flex; align-items: center; justify-content: center; height: 22px; }
.paste { width: 70px; }
.newslide { width: 90px; padding-left: 4px; }
.usedfont { width: 78px; }
.arrange { width: 66px; }
.quick { width: 76px; }
.zi {
  width: 42px;
  height: 42px;
  margin-bottom: 6px;
  border: 2px solid #b0b0b0;
  border-radius: 50%;
  background: #efefef;
  color: #555;
  font-size: 26px;
  line-height: 36px;
  text-align: center;
}
.rows { display: flex; flex-direction: column; }
.row { display: flex; align-items: center; gap: 4px; height: 34px; text-align: left; }
.row .ch { margin-left: 3px; }
.row .far { margin-left: 12px; }
.paste + .rows .ch { margin-left: 6px; }
.painter { color: #757575; }
.tight { margin-left: 4px; }
.grow { position: relative; font-size: 24px; font-weight: 600; }
.rows .grow { width: 24px; color: #d0d0d0; }
.grow.small { font-size: 20px; }
.mark { position: absolute; top: 4px; right: 4px; }
.rows .mark { top: 5px; right: 2px; }

/* Font and paragraph tools */
.tools { display: flex; align-items: center; height: 30px; }
.tools.tall { height: 35px; }
.tools.gap { gap: 3px; }
.t { display: flex; align-items: center; justify-content: center; width: 34px; height: 30px; }
.t.dd { width: 54px; justify-content: flex-start; }
.sep { width: 1px; height: 32px; margin: 0 3px; background: #555; }
.fonts { padding-left: 10px; }
.combo { position: relative; display: flex; align-items: center; width: 73px; height: 35px; margin-left: 2px; border: 1px solid #777; }
.combo.wide { width: 211px; }
.combo select { appearance: none; flex: 1; align-self: stretch; min-width: 0; padding-left: 3px; border-right: 1px solid #777; border-radius: 0; opacity: 1; }
.combo svg { margin: 0 5px; }
.b, .it, .u, .sh, .st { color: #4c4c4c; }
.b { font-weight: 700; font-size: 20px; }
.it { font: italic 700 22px/24px "Liberation Serif", serif; }
.u { font-weight: 700; text-decoration: underline; text-underline-offset: 4px; }
.sh { font-weight: 700; font-size: 20px; text-shadow: 2px 2px 1px #2a2a2a; }
.st { text-decoration: line-through; font-size: 16px; }
.aa span { width: 34px; text-align: center; font-weight: 600; }
.fc span { width: 34px; text-align: center; font-weight: 700; font-size: 22px; }
.svgt { fill: currentColor; font-family: "Open Sans", sans-serif; }
.av { font-size: 15px; }
.ab { font-size: 13px; }
.n { font-size: 8px; font-weight: 700; }
.ba { font: 700 11px "Open Sans", sans-serif; fill: #2272d6; }
.rp { font-size: 14px; font-weight: 600; }
.para { width: 246px; padding-left: 11px; }

/* Drawing */
.draw { padding-left: 13px; }
.gallery { display: flex; width: 206px; height: 93px; margin: 3px 2px 0 0; border: 1px solid #6a6a6a; background: #444746; }
.shapes { flex: 1; display: grid; grid-template-columns: repeat(6, 30px); grid-auto-rows: 30px; padding: 0 1px; }
.shapes button { display: grid; place-items: center; }
.gscroll { display: grid; grid-template-rows: repeat(3, 1fr); width: 23px; border-left: 1px solid #6a6a6a; background: #2d2d2d; }
.gscroll button { display: grid; place-items: center; }
.gscroll button + button { border-top: 1px solid #6a6a6a; }
.gscroll .off { color: #555; }
.quick + .rows { margin-left: 5px; }
.draw .dim { color: #525252; }
.draw .rows, .edit .rows { margin-top: -2px; }
.edit { padding-left: 16px; }
.rest { display: flex; align-items: flex-end; justify-content: flex-end; padding: 0 4px 6px 0; }

/* Quick tools */
.qat { flex: none; display: flex; align-items: center; height: 49px; border-bottom: 1px solid #1e1e1e; }
.q { flex: 43 1 0; display: flex; align-items: center; justify-content: center; height: 36px; color: #f1f1f1; }
.q:first-child { flex-grow: 37; }
.q:first-child svg { margin-right: 7px; }
.q:last-child { margin-right: 31px; }
.q.split { flex-grow: 56; justify-content: flex-start; }
.q.split > :first-child { margin-left: 4px; }
.q.split .ch { margin: 0 0 0 11px; }
.q.off { color: #484a49; }
.wen { width: 24px; height: 24px; background: #fff; color: #000; font-weight: 700; font-size: 20px; line-height: 23px; text-align: center; }
.bigA { width: 24px; font-size: 24px; font-weight: 700; text-align: center; }

/* Workspace */
.work { flex: 1; min-height: 0; display: flex; border-bottom: 1px solid #4a4a4a; }
.panel { display: flex; flex: none; width: 348px; border-right: 1px solid #555; margin-bottom: 2px; }
.thumbs { flex: 1; display: flex; flex-direction: column; gap: 25px; height: calc(100% + 2px); margin: 0; padding: 6px 0 0 11px; overflow: hidden; list-style: none; }
.thumbs li { display: flex; flex: none; }
.num { width: 36px; font-size: 24px; color: #f1f1f1; }
.thumb { width: 242px; height: 137px; margin-top: 6px; border: 1px solid #5c5c5c; background: #fff; }
.thumb svg { width: 100%; height: auto; }
.thumb.grad, .slide { background: linear-gradient(to top right, #b3bbf4 0, #dcdff9 19%, #fff 36%, #fff 65%, #dcdff9 82%, #b0b8f3 100%); }
.thumb.sel { border-color: #222; outline: 4px solid #ef937f; }
.thumb.study { display: flex; align-items: center; align-self: flex-start; gap: 3px; padding: 0 8px 115px; background: linear-gradient(90deg, #e0e0e0, #f2f2f2 8%, #fff 30%, #fff 55%, #eee 75%, #f8f8f8 85%, #e2e2e2); color: #0018d8; font-size: 9px; line-height: 20px; }
.thumb.study svg { width: 25px; height: 8px; margin-left: auto; }
.dot { width: 7px; height: 7px; border-radius: 50%; background: #0018d8; }
.sb { display: flex; flex-direction: column; width: 25px; margin: 2px 4px 0 0; padding: 0 1px; background: #363636; }
.sb button { display: grid; place-items: center; flex: none; height: 24px; background: #5a5a5a; color: #a6a6a6; }
.grip { background: #5a5a5a; }
.a1 { flex: 116; } .g1 { flex: 227; } .z1 { flex: 657; }
.a2 { flex: 224; } .g2 { flex: 53; } .z2 { flex: 723; }
.stage { flex: 1; position: relative; display: flex; align-items: center; justify-content: center; margin: 0 0 2px 2px; padding-bottom: 3px; border-bottom: 1px solid #555; }
.slide { width: 62.7%; aspect-ratio: 16 / 9; border: 1px solid #8a8a8a; }
.cursor { position: absolute; left: 85.5%; top: 84%; }
.right { display: flex; flex-direction: column; width: 19px; margin-bottom: 2px; border-bottom: 1px solid #555; }
.narrow { flex: 1; width: 19px; margin: 2px 0 0; padding: 0 0 0 1px; overflow: hidden; }
.narrow button { place-items: center end; }
.pg { height: 27px; padding: 0 0 0 6px; color: #a6a6a6; }
.pg:last-child { margin-bottom: 29px; }

/* Status bar */
.status { flex: none; display: flex; align-items: center; height: 32px; padding-bottom: 1px; color: #e6e6e6; white-space: nowrap; }
.status button { display: flex; align-items: center; }
.s-slide { padding-left: 3px; }
.s-spell { margin-left: 31px; }
.s-lang { margin-left: 25px; }
.s-acc { gap: 4px; margin-left: 24px; }
.fill { flex: 1; }
.s-notes { gap: 6px; margin-right: 28px; }
.s-comm { gap: 4px; margin-right: 27px; }
.status .view { justify-content: center; width: 60px; height: 32px; }
.status .view.on { background: #505050; }
.status .zb { margin-left: 8px; }
.zoom {
  appearance: none;
  width: 148px;
  height: 24px;
  margin: 0 0 0 8px;
  background:
    linear-gradient(#fff, #fff) 50% 50% / 2px 12px no-repeat,
    linear-gradient(#fff, #fff) 0 50% / 100% 2px no-repeat;
}
.zoom::-webkit-slider-thumb { appearance: none; width: 8px; height: 24px; background: #fff; border: 0; border-radius: 0; }
.pct { margin-left: 18px; }
.fit { margin: 0 2px 0 25px; }
.taskbar { flex: none; display: flex; justify-content: space-between; height: 8px; padding: 0 73px 0 1021px; background: #1b1919; }
.app { width: 55px; background: #464444; }
.tray { width: 115px; background: #2b2b2b; overflow: hidden; }
.tray i { display: block; width: 7px; height: 7px; margin: 2px 2px 0 auto; border-radius: 50%; background: #f0009a; }
```
